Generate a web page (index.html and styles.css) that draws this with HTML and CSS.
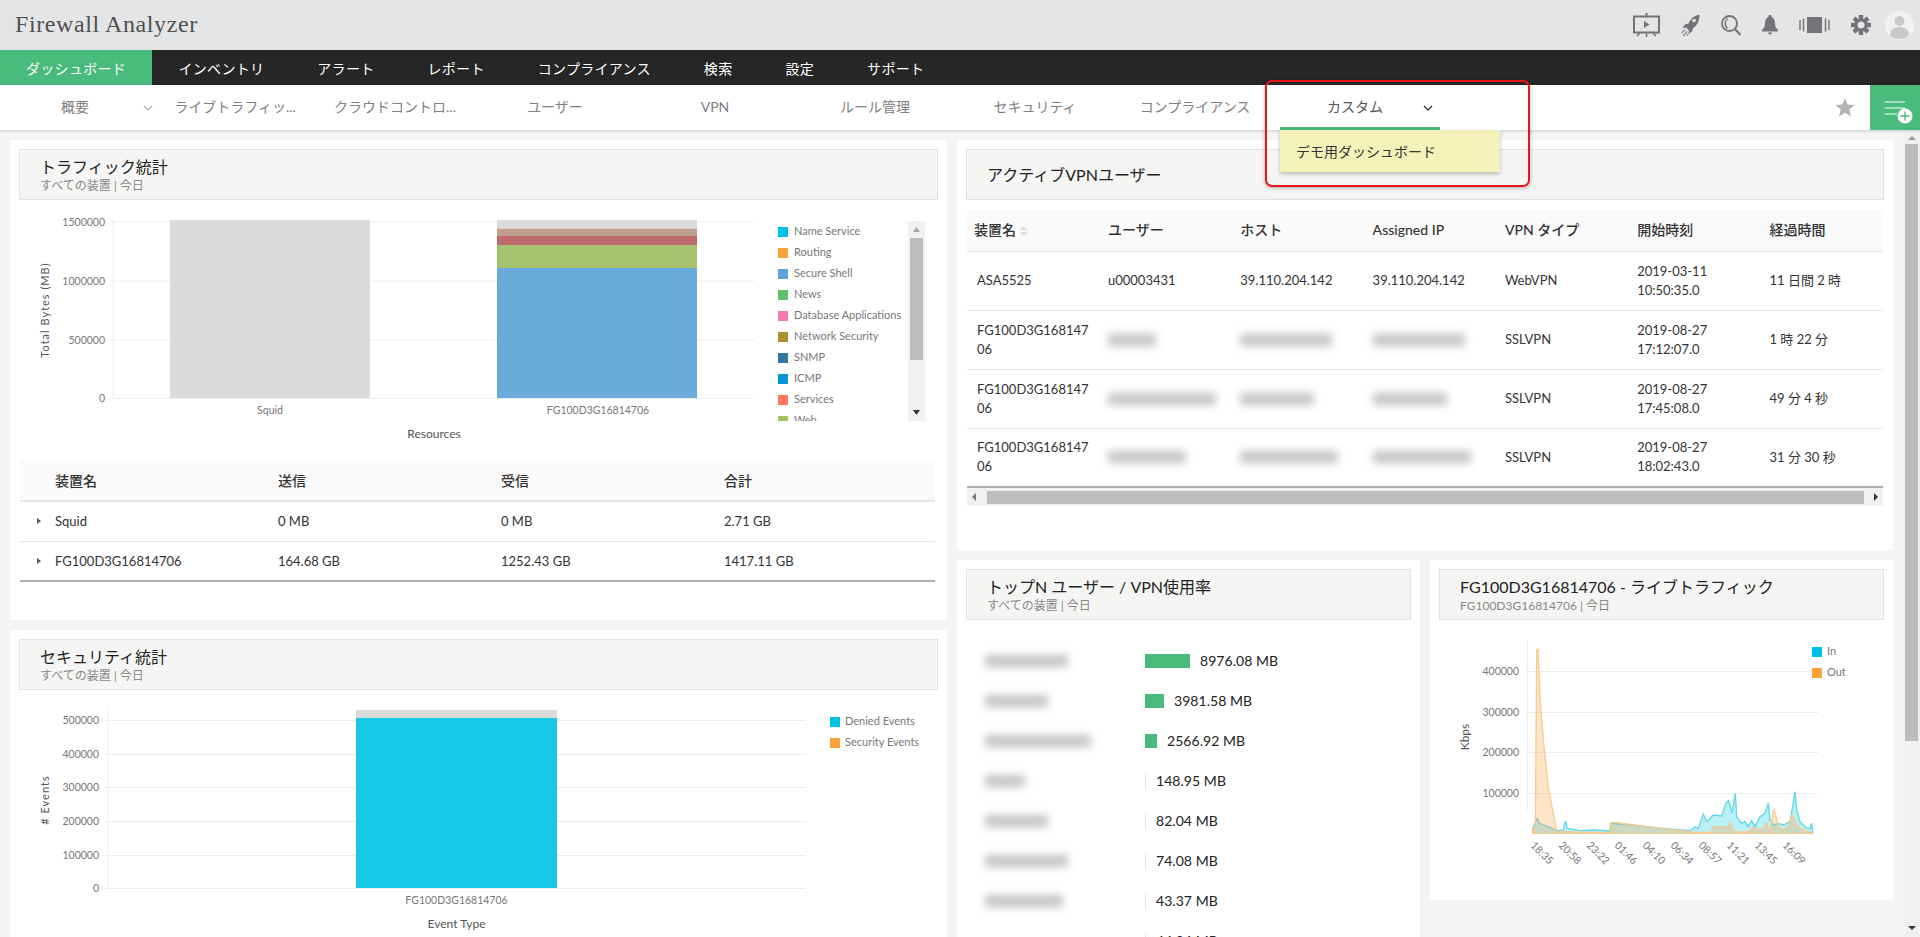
FILE: index.html
```html
<!DOCTYPE html>
<html lang="ja">
<head>
<meta charset="utf-8">
<title>Firewall Analyzer</title>
<link rel="stylesheet" href="styles.css">
</head>
<body>
<header class="topbar">
  <div class="logo">Firewall Analyzer</div>
  <div class="tools">
    <svg class="ic" width="27" height="24" viewBox="0 0 27 24"><path d="M13.5 0v3M1 3.5h25v16H1z" fill="none" stroke="#737477" stroke-width="2"/><path d="M11 8l5.5 3.500L11 15z" fill="#737477"/><path d="M13.500 20v4M7 20l-3 3M20 20l3 3" stroke="#737477" stroke-width="1.500"/></svg>
    <svg class="ic" width="19" height="23" viewBox="0 0 19 23"><path d="M18.500.5c-5 1-9 4-11 9L4 10.500 1.500 14l3.500-.5 3 3-.5 3.500 3.500-2.500 1-3.500c4.500-2.500 6.500-7.500 6.500-13.500z" fill="#737477"/><circle cx="13" cy="6.500" r="1.800" fill="#e4e5e7"/><path d="M4 15.500L.5 19M6 17.500L2 22M7.500 19.500L5.500 22" stroke="#8b8c8f" stroke-width="1.200"/></svg>
    <svg class="ic" width="20" height="21" viewBox="0 0 20 21"><circle cx="8.500" cy="8.500" r="7.500" fill="none" stroke="#737477" stroke-width="1.800"/><path d="M6.500 3.500C3.500 6 3.500 11 6.500 13.500" fill="none" stroke="#737477" stroke-width="1.500"/><path d="M14 14l5.500 6" stroke="#737477" stroke-width="2.200"/></svg>
    <svg class="ic" width="16" height="20" viewBox="0 0 16 20"><path d="M8 0a1.500 1.500 0 0 1 1.500 1.800C12 3 13 5.500 13 8.500c0 3 1 4.500 3 6.500v1.500H0V15c2-2 3-3.500 3-6.500 0-3 1-5.500 3.500-6.700A1.500 1.500 0 0 1 8 0z" fill="#737477"/><path d="M6 17.500h4a2 2 0 0 1-4 0z" fill="#737477"/></svg>
    <svg class="ic" width="31" height="16" viewBox="0 0 31 16"><rect x="8" width="15" height="16" fill="#737477"/><path d="M1 3v10M4.500 1.500v13M26.500 1.500v13M30 3v10" stroke="#77787b" stroke-width="1.500"/></svg>
    <svg class="ic" width="20" height="20" viewBox="0 0 20 20"><g fill="#737477"><rect x="7.800" y="0" width="4.400" height="20" rx=".5"/><rect x="7.800" y="0" width="4.400" height="20" rx=".5" transform="rotate(45 10 10)"/><rect x="7.800" y="0" width="4.400" height="20" rx=".5" transform="rotate(90 10 10)"/><rect x="7.800" y="0" width="4.400" height="20" rx=".5" transform="rotate(135 10 10)"/></g><circle cx="10" cy="10" r="5.300" fill="none" stroke="#737477" stroke-width="3"/><circle cx="10" cy="10" r="3.500" fill="#e4e5e7"/></svg>
    <svg class="ic avatar" width="29" height="29" viewBox="0 0 29 29"><circle cx="14.500" cy="14.500" r="14.500" fill="#f1f1f1"/><circle cx="14.500" cy="10" r="5" fill="#c9c9c9"/><path d="M5 24c0-5 4-8 9.500-8s9.500 3 9.500 8c-2.500 3-6 4-9.500 4S7.500 27 5 24z" fill="#c9c9c9"/></svg>
  </div>
</header>

<nav class="mainnav">
  <a class="mainitem active">ダッシュボード</a>
  <a class="mainitem">インベントリ</a>
  <a class="mainitem">アラート</a>
  <a class="mainitem">レポート</a>
  <a class="mainitem">コンプライアンス</a>
  <a class="mainitem">検索</a>
  <a class="mainitem">設定</a>
  <a class="mainitem">サポート</a>
</nav>

<nav class="subnav">
  <a class="tab">概要<svg class="chev" width="10" height="6" viewBox="0 0 10 6"><path d="M1 1l4 4 4-4" fill="none" stroke="#aaa" stroke-width="1.200"/></svg></a>
  <a class="tab">ライブトラフィッ...</a>
  <a class="tab">クラウドコントロ...</a>
  <a class="tab">ユーザー</a>
  <a class="tab">VPN</a>
  <a class="tab">ルール管理</a>
  <a class="tab">セキュリティ</a>
  <a class="tab">コンプライアンス</a>
  <a class="tab current">カスタム<svg class="chev" width="10" height="6" viewBox="0 0 10 6"><path d="M1 1l4 4 4-4" fill="none" stroke="#333" stroke-width="1.400"/></svg>
    <div class="dropdown">デモ用ダッシュボード</div>
    <div class="redframe"></div>
  </a>
  <svg class="star" width="20" height="19" viewBox="0 0 20 19"><path d="M10 0l2.700 6.500 7 .5-5.400 4.500 1.700 7L10 14.800 4 18.500l1.700-7L.3 7l7-.5z" fill="#b4b4b4"/></svg>
  <div class="addbtn">
    <svg width="30" height="30" viewBox="0 0 30 30"><path d="M0 1h20M0 7h20M0 13h12" stroke="#fff" stroke-width="1.200"/><circle cx="20" cy="15" r="7.500" fill="#fff"/><path d="M20 10.500v9M15.500 15h9" stroke="#48bb7d" stroke-width="1.300"/></svg>
  </div>
</nav>

<main class="main">
  <div class="col leftcol">
    <section class="panel traffic">
      <div class="phead"><h2>トラフィック統計</h2><p>すべての装置 | 今日</p></div>
      <svg class="chart" width="919" height="260" viewBox="19 200 919 260">
        <defs><clipPath id="legclip"><rect x="770" y="221" width="140" height="200"/></clipPath></defs>
        <g class="grid"><path d="M111 222H754M111 281H754M111 340H754M111 398.500H754M113 220V398"/></g>
        <g class="ax">
          <text x="105" y="226" text-anchor="end">1500000</text>
          <text x="105" y="285" text-anchor="end">1000000</text>
          <text x="105" y="344" text-anchor="end">500000</text>
          <text x="105" y="402" text-anchor="end">0</text>
          <text x="270" y="414" text-anchor="middle">Squid</text>
          <text x="598" y="414" text-anchor="middle">FG100D3G16814706</text>
          <text x="434" y="438" text-anchor="middle" class="title">Resources</text>
          <text transform="translate(49 310) rotate(-90)" text-anchor="middle" class="title wide">Total Bytes (MB)</text>
        </g>
        <rect x="170" y="220" width="200" height="178" fill="#dbdbdb"/>
        <rect x="497" y="220" width="200" height="8" fill="#dbdbdb"/>
        <rect x="497" y="228.500" width="200" height="7.500" fill="#bf9f8f"/>
        <rect x="497" y="236" width="200" height="9" fill="#bf6b6d"/>
        <rect x="497" y="245" width="200" height="23" fill="#a7c26f"/>
        <rect x="497" y="268" width="200" height="130" fill="#6babdb"/>
        <g clip-path="url(#legclip)" class="leg">
          <rect x="778" y="227" width="10" height="10" fill="#00c2e6"/><text x="794" y="235">Name Service</text>
          <rect x="778" y="248" width="10" height="10" fill="#ffa139"/><text x="794" y="256">Routing</text>
          <rect x="778" y="269" width="10" height="10" fill="#5ba4de"/><text x="794" y="277">Secure Shell</text>
          <rect x="778" y="290" width="10" height="10" fill="#5fbf6b"/><text x="794" y="298">News</text>
          <rect x="778" y="311" width="10" height="10" fill="#f379ae"/><text x="794" y="319">Database Applications</text>
          <rect x="778" y="332" width="10" height="10" fill="#ad8f2c"/><text x="794" y="340">Network Security</text>
          <rect x="778" y="353" width="10" height="10" fill="#31799c"/><text x="794" y="361">SNMP</text>
          <rect x="778" y="374" width="10" height="10" fill="#0b93d8"/><text x="794" y="382">ICMP</text>
          <rect x="778" y="395" width="10" height="10" fill="#ff7a5c"/><text x="794" y="403">Services</text>
          <rect x="778" y="416" width="10" height="10" fill="#a5c261"/><text x="794" y="424">Web</text>
        </g>
        <rect x="908" y="221" width="17" height="200" fill="#f1f1f1"/>
        <rect x="910" y="238" width="13" height="122" fill="#bdbdbd"/>
        <path d="M913 232l3.500-5 3.500 5z" fill="#a8a8a8"/>
        <path d="M913 410l3.500 5 3.500-5z" fill="#333"/>
      </svg>
      <table class="sumtable">
        <thead><tr><th>装置名</th><th>送信</th><th>受信</th><th>合計</th></tr></thead>
        <tbody>
          <tr><td><i class="caret"></i>Squid</td><td>0 MB</td><td>0 MB</td><td>2.71 GB</td></tr>
          <tr><td><i class="caret"></i>FG100D3G16814706</td><td>164.68 GB</td><td>1252.43 GB</td><td>1417.11 GB</td></tr>
        </tbody>
      </table>
    </section>

    <section class="panel">
      <div class="phead"><h2>セキュリティ統計</h2><p>すべての装置 | 今日</p></div>
      <svg class="chart" width="919" height="250" viewBox="19 690 919 250">
        <g class="grid"><path d="M105 720.500H806M105 754.500H806M105 787.500H806M105 821.500H806M105 855.500H806M105 888.500H806M108 710V888"/></g>
        <g class="ax">
          <text x="99" y="724" text-anchor="end">500000</text>
          <text x="99" y="758" text-anchor="end">400000</text>
          <text x="99" y="791" text-anchor="end">300000</text>
          <text x="99" y="825" text-anchor="end">200000</text>
          <text x="99" y="859" text-anchor="end">100000</text>
          <text x="99" y="892" text-anchor="end">0</text>
          <text x="456.500" y="904" text-anchor="middle">FG100D3G16814706</text>
          <text x="456.500" y="928" text-anchor="middle" class="title">Event Type</text>
          <text transform="translate(49 800) rotate(-90)" text-anchor="middle" class="title wide"># Events</text>
        </g>
        <rect x="356" y="710" width="201" height="8" fill="#dbdbdb"/>
        <rect x="356" y="718" width="201" height="170" fill="#17c9e6"/>
        <g class="leg">
          <rect x="830" y="717" width="10" height="10" fill="#00c2e6"/><text x="845" y="725">Denied Events</text>
          <rect x="830" y="738" width="10" height="10" fill="#ffa139"/><text x="845" y="746">Security Events</text>
        </g>
      </svg>
    </section>
  </div>

  <div class="col rightcol">
    <section class="panel vpn">
      <div class="phead single"><h2>アクティブVPNユーザー</h2></div>
      <table class="vpntable">
        <thead><tr>
          <th>装置名<svg class="sort" width="7" height="10" viewBox="0 0 7 10"><path d="M0 4l3.500-4L7 4zM0 6h7l-3.500 4z" fill="#dcdcdc"/></svg></th>
          <th>ユーザー</th><th>ホスト</th><th>Assigned IP</th><th>VPN タイプ</th><th>開始時刻</th><th>経過時間</th>
        </tr></thead>
        <tbody>
          <tr><td>ASA5525</td><td>u00003431</td><td>39.110.204.142</td><td>39.110.204.142</td><td>WebVPN</td><td>2019-03-11<br>10:50:35.0</td><td>11 日間 2 時</td></tr>
          <tr><td>FG100D3G16814706</td><td><span class="blur b48"></span></td><td><span class="blur b92"></span></td><td><span class="blur b92"></span></td><td>SSLVPN</td><td>2019-08-27<br>17:12:07.0</td><td>1 時 22 分</td></tr>
          <tr><td>FG100D3G16814706</td><td><span class="blur b108"></span></td><td><span class="blur b74"></span></td><td><span class="blur b74"></span></td><td>SSLVPN</td><td>2019-08-27<br>17:45:08.0</td><td>49 分 4 秒</td></tr>
          <tr><td>FG100D3G16814706</td><td><span class="blur b78"></span></td><td><span class="blur b98"></span></td><td><span class="blur b98"></span></td><td>SSLVPN</td><td>2019-08-27<br>18:02:43.0</td><td>31 分 30 秒</td></tr>
        </tbody>
      </table>
      <div class="hscroll"><i class="arrow-l"></i><div class="hthumb"></div><i class="arrow-r"></i></div>
    </section>

    <div class="subrow">
      <section class="panel topn">
        <div class="phead"><h2>トップN ユーザー / VPN使用率</h2><p>すべての装置 | 今日</p></div>
        <div class="toplist">
          <div class="toprow"><div class="toplabel"><span class="blur b83"></span></div><div class="topbar-v" style="width:45px"></div><span class="topval">8976.08 MB</span></div>
          <div class="toprow"><div class="toplabel"><span class="blur b63"></span></div><div class="topbar-v" style="width:19px"></div><span class="topval">3981.58 MB</span></div>
          <div class="toprow"><div class="toplabel"><span class="blur b106"></span></div><div class="topbar-v" style="width:12px"></div><span class="topval">2566.92 MB</span></div>
          <div class="toprow"><div class="toplabel"><span class="blur b40"></span></div><div class="topbar-v thin"></div><span class="topval">148.95 MB</span></div>
          <div class="toprow"><div class="toplabel"><span class="blur b63"></span></div><div class="topbar-v thin"></div><span class="topval">82.04 MB</span></div>
          <div class="toprow"><div class="toplabel"><span class="blur b83"></span></div><div class="topbar-v thin"></div><span class="topval">74.08 MB</span></div>
          <div class="toprow"><div class="toplabel"><span class="blur b78"></span></div><div class="topbar-v thin"></div><span class="topval">43.37 MB</span></div>
          <div class="toprow"><div class="toplabel"></div><div class="topbar-v thin"></div><span class="topval">44.94 MB</span></div>
        </div>
      </section>

      <section class="panel live">
        <div class="phead"><h2>FG100D3G16814706 - ライブトラフィック</h2><p>FG100D3G16814706 | 今日</p></div>
        <svg class="chart" width="445" height="280" viewBox="1439 620 445 280">
          <g class="grid"><path d="M1525 671.500H1818M1525 712.500H1818M1525 752.500H1818M1525 793.500H1818M1527.500 640V810"/></g>
          <g class="ax">
            <text x="1519" y="675" text-anchor="end">400000</text>
            <text x="1519" y="716" text-anchor="end">300000</text>
            <text x="1519" y="756" text-anchor="end">200000</text>
            <text x="1519" y="797" text-anchor="end">100000</text>
            <text transform="translate(1469 737) rotate(-90)" text-anchor="middle" class="title">Kbps</text>
            <text transform="translate(1530 846) rotate(45)">18:35</text>
            <text transform="translate(1558 846) rotate(45)">20:58</text>
            <text transform="translate(1586 846) rotate(45)">23:22</text>
            <text transform="translate(1614 846) rotate(45)">01:46</text>
            <text transform="translate(1642 846) rotate(45)">04:10</text>
            <text transform="translate(1670 846) rotate(45)">06:34</text>
            <text transform="translate(1698 846) rotate(45)">08:57</text>
            <text transform="translate(1726 846) rotate(45)">11:21</text>
            <text transform="translate(1754 846) rotate(45)">13:45</text>
            <text transform="translate(1782 846) rotate(45)">16:09</text>
          </g>
          <g transform="translate(1420 550) scale(.33333)">
            <path class="in" d="M338 850V835L345 820 352 805 358 820 380 828 410 842 430 840 436 812 442 835 480 842 520 840 570 843 572 820 600 822 680 830 760 838 810 842 825 830 835 835 850 792 860 815 880 795 905 798 918 760 926 752 936 790 946 730 950 800 965 820 975 815 985 830 995 812 1005 830 1020 800 1035 790 1045 760 1050 810 1060 825 1075 820 1090 825 1110 815 1125 725 1130 780 1140 815 1160 835 1170 835 1175 820 1178 850Z"/>
            <path class="out" d="M338 850V835L346 850 350 300 354 297 360 440 370 570 385 715 400 790 410 845 430 845 570 848 572 818 590 818 620 822 680 830 760 840 830 848 875 846 877 830 925 830 930 818 940 840 955 846 985 846 1000 830 1010 840 1030 835 1040 820 1050 850 1060 780 1066 790 1075 830 1090 840 1105 830 1115 795 1122 800 1130 825 1150 840 1178 850Z"/>
          </g>
          <g class="leg">
            <rect x="1812" y="647" width="10" height="10" fill="#00c2e6"/><text x="1827" y="655">In</text>
            <rect x="1812" y="668" width="10" height="10" fill="#ffa139"/><text x="1827" y="676">Out</text>
          </g>
        </svg>
      </section>
    </div>
  </div>

  <aside class="vscroll"><i class="arrow-u"></i><div class="vthumb"></div><i class="arrow-d"></i></aside>
</main>
</body>
</html>
```

FILE: styles.css
```css
* { box-sizing: border-box; }
html, body { margin: 0; height: 937px; overflow: hidden; }
body { font-family: Lato, "Noto Sans CJK JP", sans-serif; font-size: 13px; color: #333; background: #f5f5f5; }

.topbar { height: 50px; display: flex; align-items: center; justify-content: space-between; background: #e4e5e7; padding: 0 6px 0 15px; }
.logo { font-family: "Liberation Serif", serif; font-size: 24px; letter-spacing: .6px; color: #505050; position: relative; top: -1px; }
.tools { display: flex; align-items: center; gap: 21px; }
.ic { display: block; }
.avatar { margin-left: -7px; }

.mainnav { height: 35px; display: flex; background: #262626; }
.mainitem { display: flex; align-items: center; padding: 0 26.500px; color: #fff; font-size: 14px; letter-spacing: .3px; white-space: nowrap; }
.mainitem.active { background: #48bb7d; width: 152px; padding: 0 26px; }

.subnav { height: 45px; display: flex; align-items: center; background: #fff; box-shadow: 0 1px 3px rgba(0,0,0,.18); position: relative; z-index: 5; }
.tab { width: 160px; height: 45px; padding: 0 10px 3px 0; display: flex; align-items: center; justify-content: center; font-size: 14px; color: #808080; position: relative; flex: none; }
.chev { position: absolute; left: 143px; top: 20px; }
.tab.current { color: #555; padding-bottom: 0; border-bottom: 3px solid #48bb7d; }
.dropdown { position: absolute; left: 0; top: 45px; width: 220px; height: 42px; padding-left: 16px; display: flex; align-items: center; background: #f4f1b9; color: #333; box-shadow: 0 2px 4px rgba(0,0,0,.25); }
.redframe { position: absolute; left: -15px; top: -5px; width: 265px; height: 107px; border: 2px solid #e8141c; border-radius: 7px; box-shadow: 0 1px 4px rgba(0,0,0,.3); }
.star { margin-left: auto; margin-right: 15px; }
.addbtn { width: 50px; height: 45px; background: #48bb7d; padding: 15.500px 0 0 15px; flex: none; }
.addbtn svg { display: block; }

.main { height: 807px; display: flex; padding: 10px 0 0 10px; overflow: hidden; }
.col { display: flex; flex-direction: column; gap: 10px; flex: none; }
.leftcol { width: 937px; }
.rightcol { width: 936px; margin-left: 10px; }
.panel { background: #fff; padding: 9px 9px 0; flex: none; }
.phead { height: 51px; background: #f5f5f3; border: 1px solid #e2e2e2; padding-left: 20px; display: flex; flex-direction: column; justify-content: center; }
.phead h2 { margin: 0; font-size: 16px; font-weight: 400; line-height: 20px; color: #222; }
.phead p { margin: 1px 0 -1px; font-size: 12px; line-height: 15px; color: #888; }
.chart { display: block; }
.traffic { height: 480px; }

.grid path { fill: none; stroke: #ececec; stroke-width: 1; }
.ax text { font-size: 10.500px; fill: #777; }
.ax .title { fill: #555; font-size: 12px; }
.ax .wide { font-size: 11px; letter-spacing: 1px; }
.leg text { font-size: 11px; fill: #777; }
.in { fill: rgba(23,201,230,.3); stroke: #62d6ea; stroke-width: 4; }
.out { fill: rgba(255,161,57,.28); stroke: #f9c98f; stroke-width: 4; }

table { border-collapse: collapse; table-layout: fixed; }
.sumtable { width: 915px; margin-left: 1px; }
.sumtable th { width: 223px; height: 41px; background: #fafafa; border-bottom: 2px solid #e6e6e6; text-align: left; padding: 0 0 0 35px; font-size: 14px; font-weight: 500; color: #333; }
.sumtable th:last-child { width: auto; }
.sumtable td { height: 40px; border-bottom: 1px solid #e6e6e6; padding: 0 0 0 35px; position: relative; white-space: nowrap; }
.sumtable tr:last-child td { border-bottom: 2px solid #b0b0b0; }
.caret { position: absolute; left: 17px; top: 16px; border-left: 4px solid #555; border-top: 3.500px solid transparent; border-bottom: 3.500px solid transparent; }

.vpn { height: 410px; }
.vpntable { width: 916px; margin: 10px 0 0 1px; }
.vpntable th { width: 132.300px; height: 41px; background: #fafafa; border-bottom: 1px solid #e6e6e6; text-align: left; padding: 0 0 2px 8px; font-size: 14px; font-weight: 500; color: #333; white-space: nowrap; }
.vpntable th:first-child { width: 133px; padding-left: 7px; }
.vpntable th:last-child { width: auto; }
.vpntable td { height: 59px; line-height: 19px; border-bottom: 1px solid #e6e6e6; padding: 0 8px; word-break: break-all; }
.vpntable td:first-child { padding-left: 10px; }
.vpntable tr:last-child td { border-bottom: 2px solid #b0b0b0; }
.sort { margin-left: 4px; vertical-align: -1px; }
.blur { display: block; height: 12px; background: #c4c4c4; filter: blur(4px); }
.b40 { width: 40px; } .b48 { width: 48px; } .b63 { width: 63px; } .b74 { width: 74px; } .b78 { width: 78px; } .b83 { width: 83px; } .b92 { width: 92px; } .b98 { width: 98px; } .b106 { width: 106px; } .b108 { width: 108px; }
.hscroll { width: 916px; height: 18px; margin-left: 1px; background: #f1f1f1; display: flex; align-items: center; justify-content: space-between; padding: 0 5px; }
.hthumb { width: 877px; height: 13px; background: #bdbdbd; }
.arrow-l { border-right: 4px solid #777; border-top: 4px solid transparent; border-bottom: 4px solid transparent; }
.arrow-r { border-left: 4px solid #333; border-top: 4px solid transparent; border-bottom: 4px solid transparent; }

.subrow { display: flex; gap: 10px; align-items: flex-start; }
.subrow .panel { width: 463px; }
.live { height: 340px; }
.topn { height: 380px; }
.toplist { margin-top: 21px; }
.toprow { height: 40px; display: flex; align-items: center; }
.toplabel { width: 179px; padding-left: 19px; flex: none; }
.topbar-v { height: 14px; background: #48bb7d; flex: none; }
.topbar-v.thin { width: 1px; height: 15px; background: #e4e4da; }
.topval { margin-left: 10px; margin-top: -2px; font-size: 14px; color: #222; letter-spacing: .05px; white-space: nowrap; }

.vscroll { width: 17px; height: 807px; margin-left: 10px; background: #f1f1f1; display: flex; flex-direction: column; align-items: center; flex: none; margin-top: -10px; padding-top: 6px; }
.vthumb { width: 13px; height: 597px; margin-top: 4px; background: #bdbdbd; }
.arrow-u { border-bottom: 4px solid #999; border-left: 4px solid transparent; border-right: 4px solid transparent; }
.arrow-d { border-top: 4px solid #333; border-left: 4px solid transparent; border-right: 4px solid transparent; margin-top: auto; margin-bottom: 7px; }
```
